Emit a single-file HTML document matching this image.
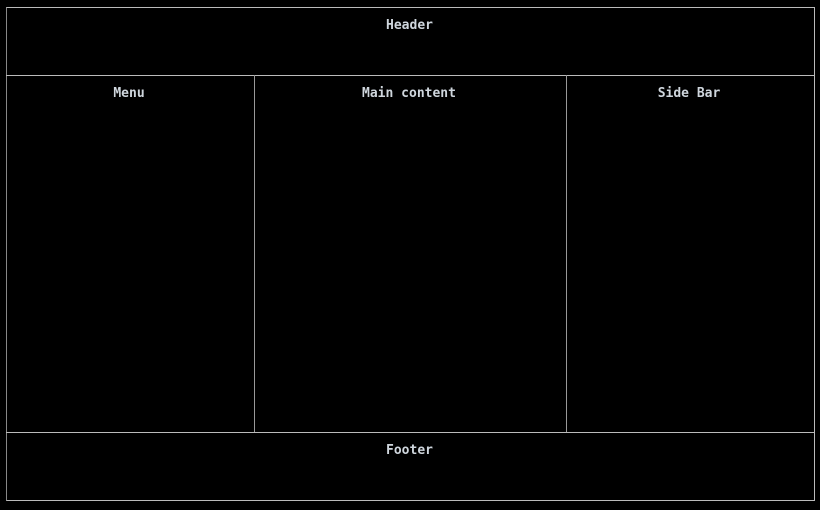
<!DOCTYPE html>
<html><head><style>
body{margin:0;background:#000;width:820px;height:510px;position:relative;overflow:hidden;font-family:"DejaVu Sans Mono","Liberation Mono",monospace;font-weight:bold;font-size:13px;color:#cfd6dd}
.b{position:absolute;border:1px solid #bbb;box-sizing:border-box}
.t{position:absolute;text-align:center;line-height:16px}
.l{position:absolute;background:#bbb}
</style></head><body>
<div class="b" style="left:6px;top:7px;width:809px;height:494px;border-left-color:#888"></div>
<div class="l" style="left:6px;top:75px;width:809px;height:1px"></div>
<div class="l" style="left:6px;top:432px;width:809px;height:1px"></div>
<div class="l" style="left:254px;top:75px;width:1px;height:357px;background:#999"></div>
<div class="l" style="left:566px;top:75px;width:1px;height:357px;background:#999"></div>
<div class="t" style="left:5px;width:809px;top:18px">Header</div>
<div class="t" style="left:5px;width:248px;top:86px">Menu</div>
<div class="t" style="left:253px;width:312px;top:86px">Main content</div>
<div class="t" style="left:565px;width:248px;top:86px">Side Bar</div>
<div class="t" style="left:5px;width:809px;top:443px">Footer</div>
</body></html>
